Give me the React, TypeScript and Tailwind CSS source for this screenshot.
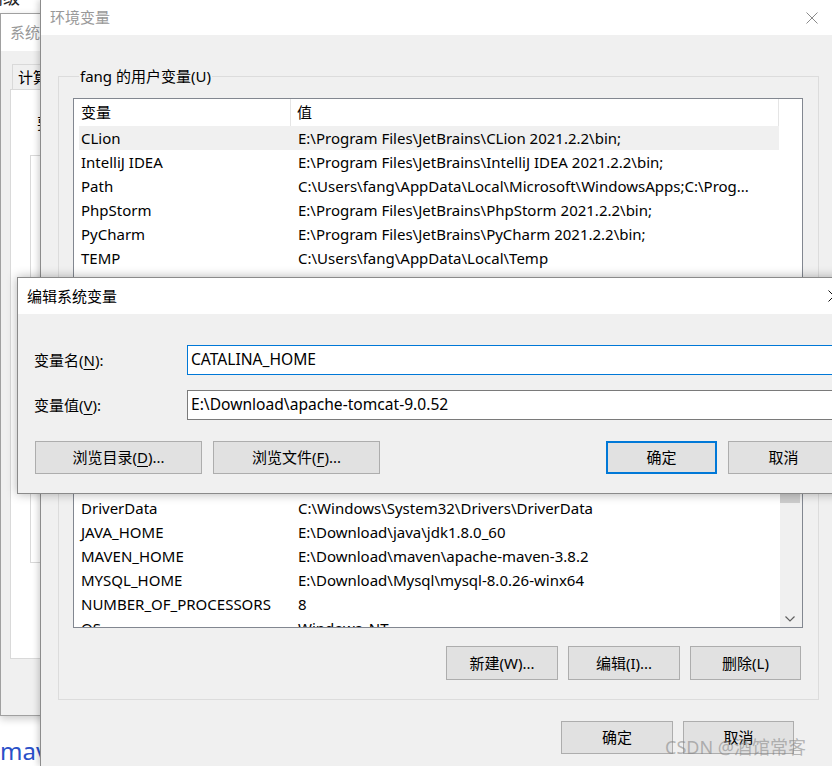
import type { ReactNode } from 'react';

const userVars = [
  { name: 'CLion', value: 'E:\\Program Files\\JetBrains\\CLion 2021.2.2\\bin;', selected: true },
  { name: 'IntelliJ IDEA', value: 'E:\\Program Files\\JetBrains\\IntelliJ IDEA 2021.2.2\\bin;' },
  { name: 'Path', value: 'C:\\Users\\fang\\AppData\\Local\\Microsoft\\WindowsApps;C:\\Prog...' },
  { name: 'PhpStorm', value: 'E:\\Program Files\\JetBrains\\PhpStorm 2021.2.2\\bin;' },
  { name: 'PyCharm', value: 'E:\\Program Files\\JetBrains\\PyCharm 2021.2.2\\bin;' },
  { name: 'TEMP', value: 'C:\\Users\\fang\\AppData\\Local\\Temp' },
  { name: 'TMP', value: 'C:\\Users\\fang\\AppData\\Local\\Temp' },
];

const systemVars = [
  { name: 'CATALINA_HOME', value: 'E:\\Download\\apache-tomcat-9.0.52' },
  { name: 'CLASSPATH', value: '.;%JAVA_HOME%\\lib;%JAVA_HOME%\\lib\\tools.jar' },
  { name: 'ComSpec', value: 'C:\\Windows\\system32\\cmd.exe' },
  { name: 'DriverData', value: 'C:\\Windows\\System32\\Drivers\\DriverData' },
  { name: 'JAVA_HOME', value: 'E:\\Download\\java\\jdk1.8.0_60' },
  { name: 'MAVEN_HOME', value: 'E:\\Download\\maven\\apache-maven-3.8.2' },
  { name: 'MYSQL_HOME', value: 'E:\\Download\\Mysql\\mysql-8.0.26-winx64' },
  { name: 'NUMBER_OF_PROCESSORS', value: '8' },
  { name: 'OS', value: 'Windows_NT' },
];

function Btn({ children, className = '' }: { children: ReactNode; className?: string }) {
  return (
    <div className={`flex shrink-0 items-center justify-center bg-[#e1e1e1] text-[15px] whitespace-nowrap ${className}`}>
      {children}
    </div>
  );
}

// mnemonic letter, underlined like Win32 labels
function Key({ children }: { children: ReactNode }) {
  return <u className="underline-offset-[3px]">{children}</u>;
}

function CloseX({ color }: { color: string }) {
  return (
    <svg width="12" height="12" viewBox="0 0 12 12" className="shrink-0">
      <path d="M0.5 0.5 L11.5 11.5 M11.5 0.5 L0.5 11.5" stroke={color} strokeWidth="1" />
    </svg>
  );
}

function Row({ name, value, selected }: { name: string; value: string; selected?: boolean }) {
  return (
    <div className={`ml-[5px] flex h-[24px] w-[700px] shrink-0 items-center ${selected ? 'bg-[#f0f0f0]' : ''}`}>
      <div className="w-[212px] shrink-0 pl-[2px] whitespace-nowrap">{name}</div>
      <div className="min-w-0 flex-1 truncate pl-[7px]">{value}</div>
    </div>
  );
}

function Header() {
  return (
    <div className="flex h-[27px] shrink-0 items-center">
      <div className="flex h-full w-[217px] items-center border-r border-[#e5e5e5] pl-[7px]">变量</div>
      <div className="flex h-full w-[488px] items-center border-r border-[#e5e5e5] pl-[6px]">值</div>
    </div>
  );
}

function SystemWindow() {
  return (
    <div className="absolute left-0 top-[13px] flex h-[703px] w-[90px] flex-col border border-[#a0a0a0] bg-[#f0f0f0] shadow-[0_3px_8px_rgba(0,0,0,0.2)]">
      <div className="flex h-[37px] items-center bg-white pl-[9px] text-[15px] whitespace-nowrap text-[#999]">系统属性</div>
      <div className="mt-[13px] ml-[11px] flex h-[25px] w-[70px] items-center border border-b-0 border-[#d9d9d9] bg-[#f0f0f0] pl-[5px] whitespace-nowrap">
        计算机名
      </div>
      <div className="ml-[9px] flex h-[570px] w-[80px] flex-col border border-[#d9d9d9] bg-white">
        <div className="mt-[22px] ml-[26px] text-[15px] whitespace-nowrap">要重命名</div>
        <div className="mt-[20px] ml-[19px] h-[408px] w-[60px] border border-[#d9d9d9]"></div>
      </div>
    </div>
  );
}

function EnvWindow() {
  return (
    <div className="absolute left-[40px] top-0 flex h-[766px] w-[792px] flex-col border-l border-[#8c8c8c] bg-[#f0f0f0] shadow-[-2px_0_6px_rgba(0,0,0,0.18)]">
      <div className="flex h-[35px] shrink-0 items-center justify-between bg-white pl-[9px] pr-[14px]">
        <span className="text-[15px] text-[#999]">环境变量</span>
        <CloseX color="#8a8a8a" />
      </div>

      <fieldset className="mt-[31px] ml-[17px] h-[289px] w-[761px] shrink-0 border border-[#dcdcdc] pl-[14px]">
        <legend className="ml-[6px] px-[1px] text-[15px] leading-[20px]">fang 的用户变量(U)</legend>
        <div className="mt-[12px] flex h-[200px] w-[730px] flex-col overflow-hidden border border-[#828790] bg-white">
          <Header />
          {userVars.map((v) => (
            <Row key={v.name} {...v} />
          ))}
        </div>
        <div className="mt-[12px] mr-[17px] flex justify-end gap-[11px]">
          <Btn className="h-[34px] w-[111px] border border-[#adadad]">新建(N)...</Btn>
          <Btn className="h-[34px] w-[111px] border border-[#adadad]">编辑(E)...</Btn>
          <Btn className="h-[34px] w-[111px] border border-[#adadad]">删除(D)</Btn>
        </div>
      </fieldset>

      <fieldset className="mt-[7px] ml-[17px] h-[338px] w-[761px] shrink-0 border border-[#dcdcdc] pl-[14px]">
        <legend className="ml-[6px] px-[1px] text-[15px] leading-[20px]">系统变量(S)</legend>
        <div className="mt-[14px] flex h-[232px] w-[730px] overflow-hidden border border-[#828790] bg-white">
          <div className="flex w-[706px] shrink-0 flex-col">
            <Header />
            {systemVars.map((v) => (
              <Row key={v.name} {...v} />
            ))}
          </div>
          <div className="flex w-[22px] shrink-0 flex-col bg-[#f0f0f0]">
            <div className="h-[17px] shrink-0"></div>
            <div className="h-[89px] w-[20px] shrink-0 bg-[#cdcdcd]"></div>
            <div className="flex-1"></div>
            <div className="flex h-[17px] shrink-0 items-center justify-center pr-[2px]">
              <svg width="10" height="6" viewBox="0 0 10 6">
                <path d="M0.5 0.5 L5 5 L9.5 0.5" fill="none" stroke="#606060" strokeWidth="1.2" />
              </svg>
            </div>
          </div>
        </div>
        <div className="mt-[18px] mr-[17px] flex justify-end gap-[10px]">
          <Btn className="h-[34px] w-[112px] border border-[#adadad]">新建(W)...</Btn>
          <Btn className="h-[34px] w-[112px] border border-[#adadad]">编辑(I)...</Btn>
          <Btn className="h-[34px] w-[111px] border border-[#adadad]">删除(L)</Btn>
        </div>
      </fieldset>

      <div className="mt-[21px] mr-[38px] flex justify-end gap-[10px]">
        <Btn className="h-[33px] w-[112px] border border-[#adadad]">确定</Btn>
        <Btn className="h-[33px] w-[111px] border border-[#adadad]">取消</Btn>
      </div>
    </div>
  );
}

function EditDialog() {
  return (
    <div className="absolute left-[17px] top-[277px] flex h-[217px] w-[841px] flex-col border border-[#8a8a8a] bg-[#f0f0f0] shadow-[0_0_10px_rgba(0,0,0,0.3)]">
      <div className="flex h-[36px] shrink-0 items-center justify-between bg-white pl-[9px] pr-[17px]">
        <span className="text-[15px]">编辑系统变量</span>
        <CloseX color="#111" />
      </div>
      <div className="mt-[31px] flex h-[30px] items-center">
        <div className="w-[169px] shrink-0 pl-[16px] whitespace-nowrap">
          变量名(<Key>N</Key>):
        </div>
        <div className="flex h-[30px] w-[660px] shrink-0 items-center border border-[#0078d7] bg-white pl-[3px] text-[15.6px]">
          CATALINA_HOME
        </div>
      </div>
      <div className="mt-[15px] flex h-[30px] items-center">
        <div className="w-[169px] shrink-0 pl-[16px] whitespace-nowrap">
          变量值(<Key>V</Key>):
        </div>
        <div className="flex h-[30px] w-[660px] shrink-0 items-center border border-[#7a7a7a] bg-white pl-[3px] text-[15.6px]">
          E:\Download\apache-tomcat-9.0.52
        </div>
      </div>
      <div className="mt-[21px] flex">
        <Btn className="ml-[17px] h-[33px] w-[167px] border border-[#adadad]">
          浏览目录(<Key>D</Key>)...
        </Btn>
        <Btn className="ml-[11px] h-[33px] w-[167px] border border-[#adadad]">
          浏览文件(<Key>F</Key>)...
        </Btn>
        <Btn className="ml-[226px] h-[33px] w-[111px] border-2 border-[#0078d7]">确定</Btn>
        <Btn className="ml-[11px] h-[33px] w-[111px] border border-[#adadad]">取消</Btn>
      </div>
    </div>
  );
}

export default function App() {
  return (
    <div className="relative h-[766px] w-[832px] overflow-hidden bg-white font-['Noto_Sans','Noto_Sans_CJK_SC',sans-serif] text-[15px] text-black">
      <div className="absolute left-[-14px] top-[-15px] text-[17px] whitespace-nowrap text-[#222]">高级</div>
      <SystemWindow />
      <div className="absolute left-0 top-[736px] text-[24px] leading-[30px] text-[#2a50c8]">maven</div>
      <EnvWindow />
      <EditDialog />
      <div className="absolute left-[665px] top-[735px] text-[18px] leading-[24px] whitespace-nowrap text-[#8080808c]">
        CSDN @酒馆常客
      </div>
    </div>
  );
}
